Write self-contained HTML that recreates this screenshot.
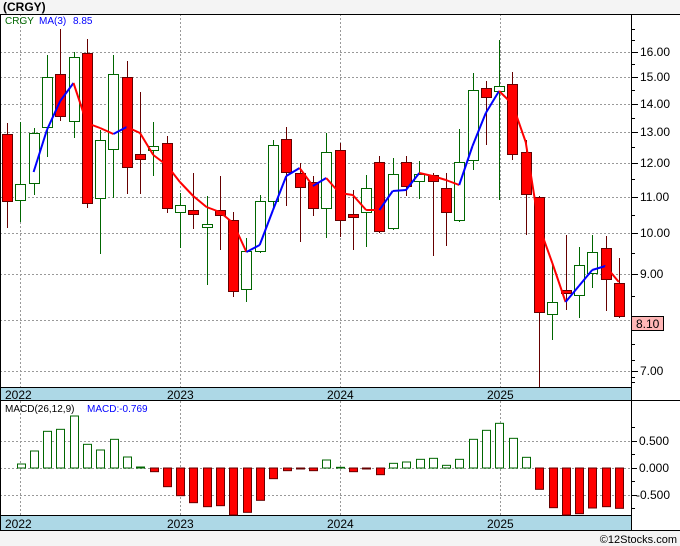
<!DOCTYPE html>
<html><head><meta charset="utf-8"><style>
html,body{margin:0;padding:0;background:#f4f4f4}
svg{display:block}
text{font-family:"Liberation Sans","DejaVu Sans",sans-serif}
</style></head><body>
<svg id="s" width="680" height="546" xmlns="http://www.w3.org/2000/svg">
<rect x="0" y="0" width="680" height="546" fill="#f4f4f4"/>
<rect x="0" y="14" width="680" height="517" fill="#fff"/>
<text x="3" y="11" font-size="12" font-weight="bold" fill="#000">(CRGY)</text>
<g id="g"></g>
</svg>
<script>
var g=document.getElementById('g'),h='';
function L(x1,y1,x2,y2,c,w,d){h+='<line x1="'+x1+'" y1="'+y1+'" x2="'+x2+'" y2="'+y2+'" stroke="'+c+'" stroke-width="'+(w||1)+'"'+(d?' stroke-dasharray="'+d+'"':'')+'/>';}
function R(x,y,w,hh,f,s){h+='<rect x="'+x+'" y="'+y+'" width="'+w+'" height="'+hh+'" fill="'+f+'"'+(s?' stroke="'+s+'" stroke-width="1"':'')+'/>';}
function T(x,y,t,c,sz,a){h+='<text x="'+x+'" y="'+y+'" font-size="'+(sz||12)+'" fill="'+(c||'#000')+'"'+(a?' text-anchor="'+a+'"':'')+'>'+t+'</text>';}
function py(p){return 1122-385.9*Math.log(p);}
[16,15,14,13,12,11,10,9,8,7].forEach(function(p){var y=Math.round(py(p))+.5;L(0,y,631,y,'#999',1,'2,2');});
[20.5,180.5,340.5,500.5].forEach(function(x){L(x,14,x,387,'#999',1,'2,2');L(x,401,x,515,'#999',1,'2,2');});
[441.5,468.5,495.5].forEach(function(y){L(0,y,631,y,'#999',1,'2,2');});
var c=[[134,201,123,228,1],[184,200,122,222,0],[133,183,128,195,0],[77,127,55,157,0],[74,116,29,121,1],[57,121,52,138,0],[53,203,39,208,1],[140,198,130,254,0],[74,149,55,198,0],[77,167,61,194,1],[154,159,92,194,1],[146,150,122,176,0],[143,208,136,213,1],[205,212,193,248,0],[210,214,173,229,1],[224,227,196,285,0],[210,215,176,250,1],[220,291,212,297,1],[251,289,238,302,0],[201,251,195,253,0],[145,201,140,210,0],[139,172,127,206,1],[173,187,163,242,1],[182,208,176,216,1],[152,208,133,238,0],[150,220,143,237,1],[214,217,190,250,1],[188,212,175,247,0],[162,231,156,233,1],[174,228,158,230,0],[162,186,156,196,1],[174,181,161,199,0],[175,181,173,256,1],[188,212,173,246,1],[162,220,129,222,0],[90,160,73,170,0],[88,97,81,145,1],[86,91,40,200,0],[84,154,72,160,1],[152,194,140,235,1],[197,312,196,387,1],[302,314,263,340,0],[290,293,235,310,1],[265,295,247,318,0],[252,273,235,288,0],[248,279,236,311,1],[283,316,258,318,1]];
c.forEach(function(k,i){var x=Math.round(7+13.3*i);var col=k[4]?'#600':'#060';L(x+.5,k[2],x+.5,k[3],col,1);
 if(k[4])R(x-4.5,k[0]+.5,10,Math.max(k[1]-k[0],2),'#f00','#600');else R(x-4.5,k[0]+.5,10,Math.max(k[1]-k[0],2),'#fff','#060');});
var m=[,,172,130,101,83,123,128,134,127,133,155,165,182,196,207,212,223,252,245,210,176,168,186,178,193,195,210,210,191,190,173,176,180,185,146,113,91,104,142,226,263,302,286,270,266,282];
for(var i=3;i<m.length;i++){L(7+13.3*(i-1),m[i-1],7+13.3*i,m[i],m[i]<m[i-1]?'#00f':'#f00',2);}
T(5,24,'CRGY','#060',10);T(39,24,'MA(3)','#00f',10);T(73,24,'8.85','#00f',10);
L(631.5,14,631.5,531,'#000',1);
[16,15,14,13,12,11,10,9,7].forEach(function(p){var y=Math.round(py(p));L(631,y+.5,638,y+.5,'#000');T(640,y+4,p.toFixed(2),'#000',12);});
[17,16.5,15.5,14.5,13.5,12.5,11.5,10.5,9.5,8.5,8,7.5,7.2,6.9,6.8].forEach(function(p){var y=Math.round(py(p));L(631,y+.5,635,y+.5,'#000');});
R(631.5,316.5,32,14,'#ffb6b6','#000');T(636,328,'8.10','#000',12);
R(0,387,631,14,'#add8e6');L(0,387.5,631,387.5,'#000');L(0,400.5,680,400.5,'#000');
R(0,516,631,14,'#add8e6');L(0,515.5,631,515.5,'#000');L(0,530.5,680,530.5,'#000');
[['2022',5],['2023',167],['2024',327],['2025',487]].forEach(function(a){T(a[1],399,a[0],'#000',12);T(a[1],528,a[0],'#000',12);});
L(0.5,14,0.5,531,'#000');L(0,14.5,680,14.5,'#000');
var b=[252,213,154,148,108,193,210,178,231,261,275,320,347,368,380,377,405,397,361,296,272,266,272,240,262,275,265,284,250,246,238,235,256,238,178,151,130,175,232,328,383,405,401,384,380,385];
b.forEach(function(v,i){var x=Math.round(16.5+13.3*i)+.5;var y=380+v/3;if(y<468)R(x,y,8,468-y,'#fff','#060');else R(x,468,8,Math.max(y-468,1),'#f00','#600');});
T(5,412,'MACD(26,12,9)','#000',10);T(87,412,'MACD:-0.769','#00f',10);
[['0.500',441],['0.000',468],['-0.500',495]].forEach(function(a){L(631,a[1]+.5,637,a[1]+.5,'#000');T(a[0][0]=='-'?636:639,a[1]+4,a[0],'#000',12);});
[427,454,481,508].forEach(function(y){L(631,y+.5,635,y+.5,'#000');});
T(677,543,'©12Stocks.com','#000',11,'end');
g.innerHTML=h;
</script>
</body></html>
